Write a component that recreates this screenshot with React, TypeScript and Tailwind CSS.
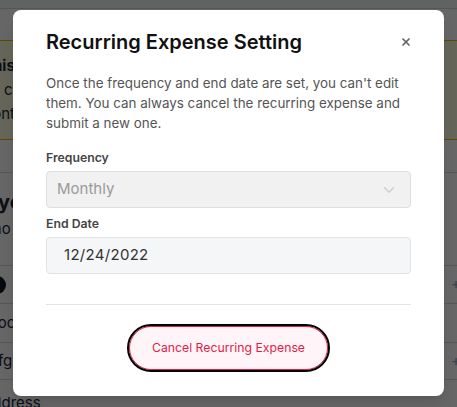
import { X, ChevronDown } from "lucide-react";

function BackgroundPage() {
  return (
    <div className="flex flex-col text-[15px] text-gray-800">
      <div className="h-[9px] border-b border-gray-300 bg-gray-100" />
      <div className="h-[31px]" />
      <div className="flex h-[100px] flex-col justify-center border-y border-yellow-500 bg-[#fdfde0] leading-[24px]">
        <p className="-ml-[17px] font-bold whitespace-nowrap">This is a note</p>
        <p className="ml-[4px] whitespace-nowrap">click to change</p>
        <p className="-ml-[21px] whitespace-nowrap">monthly</p>
      </div>
      <div className="h-[33px] border-b border-gray-300" />
      <div className="flex h-[93px] flex-col border-b border-gray-300 pt-[14px]">
        <p className="-ml-[26px] text-[20px] font-bold whitespace-nowrap">Payee Details</p>
        <p className="-ml-[22px] mt-[1px] whitespace-nowrap">Who is this for</p>
      </div>
      <div className="flex h-[38px] items-center justify-between border-b border-gray-300">
        <div className="-ml-[12px] h-[18px] w-[18px] rounded-full bg-gray-900" />
        <span className="mr-[-4px] text-gray-400">+</span>
      </div>
      <div className="flex h-[39px] items-center border-b border-gray-300">
        <p className="-ml-[22px] whitespace-nowrap">Choose one</p>
      </div>
      <div className="flex h-[37px] items-center justify-between border-b border-gray-300">
        <p className="-ml-[2px] whitespace-nowrap">fgh</p>
        <span className="mr-[-4px] text-gray-400">+</span>
      </div>
      <p className="-ml-[18px] pt-[12px] whitespace-nowrap">Address</p>
    </div>
  );
}

export default function App() {
  return (
    <div className="relative h-[407px] w-[457px] overflow-hidden bg-white font-['Inter',sans-serif]">
      <BackgroundPage />
      <div className="absolute inset-0 bg-black/60" />

      <div className="absolute left-[13px] top-[10px] w-[431px] rounded-lg bg-white px-[33px] pb-[26px] pt-[19px] shadow-lg">
        <div className="flex items-center justify-between">
          <h2 className="text-[20px] font-semibold leading-[26px] text-[#111]">
            Recurring Expense Setting
          </h2>
          <button className="mr-[-1px] text-[#666]">
            <X size={12} strokeWidth={3.5} />
          </button>
        </div>

        <p className="mt-[18px] text-[13.4px] leading-[20px] text-[#555]">
          Once the frequency and end date are set, you can't edit them. You
          can always cancel the recurring expense and submit a new one.
        </p>

        <div className="mt-[16px] flex flex-col">
          <label className="text-[12.25px] font-semibold leading-[18px] text-[#444]">
            Frequency
          </label>
          <div className="mt-[4px] flex h-[37px] items-center justify-between rounded-[4px] border border-[#dedede] bg-[#f1f1f1] pl-[10px] pr-[12px]">
            <span className="text-[15px] text-[#9a9a9a]">Monthly</span>
            <ChevronDown size={18} strokeWidth={2} className="text-[#cfcfcf]" />
          </div>

          <label className="mt-[7px] text-[12.25px] font-semibold leading-[18px] text-[#444]">
            End Date
          </label>
          <div className="mt-[4px] flex h-[37px] items-center rounded-[4px] border border-[#e3e3e3] bg-[#f5f6f8] pl-[17px]">
            <span className="text-[15px] tracking-[0.3px] text-[#333]">
              12/24/2022
            </span>
          </div>
        </div>

        <div className="mt-[30px] border-t border-[#e2e2e2]" />

        <div className="mt-[21px] flex justify-center">
          <button className="h-[44px] w-[199px] rounded-full border border-[#e11d48] bg-[#fff5f8] text-[12.25px] text-[#e11d48] outline outline-2 outline-black">
            Cancel Recurring Expense
          </button>
        </div>
      </div>
    </div>
  );
}
